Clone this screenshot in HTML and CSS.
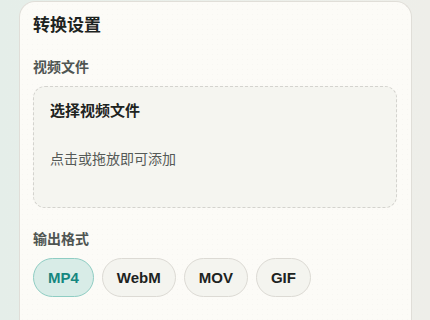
FILE: index.html
```html
<!DOCTYPE html>
<html lang="zh-CN">
<head>
<meta charset="UTF-8">
<title>转换设置</title>
<link rel="stylesheet" href="styles.css">
</head>
<body>
<div class="panel">
    <h2 class="panel-title">转换设置</h2>

    <div class="field-label">视频文件</div>
    <div class="dropzone">
        <div class="dropzone-title">选择视频文件</div>
        <div class="dropzone-hint">点击或拖放即可添加</div>
    </div>

    <div class="field-label">输出格式</div>
    <div class="chips">
        <button class="chip active">MP4</button>
        <button class="chip">WebM</button>
        <button class="chip">MOV</button>
        <button class="chip">GIF</button>
    </div>
</div>
</body>
</html>
```

FILE: styles.css
```css
body {
    margin: 0;
    padding: 1px 0 0 19px;
    font-family: "Noto Sans CJK SC", "Liberation Sans", sans-serif;
    background: linear-gradient(90deg, #e5eee9 0%, #ebefea 50%, #eeeee9 100%);
    height: 100vh;
    overflow: hidden;
    box-sizing: border-box;
    display: flex;
    flex-direction: column;
}

/* 卡片延伸到窗口底部，底边不显示 */
.panel {
    width: 393px;
    flex: 1;
    box-sizing: border-box;
    background-color: #fcfbf7;
    background-image: radial-gradient(rgba(0,0,0,0.02) 0.6px, transparent 0.8px);
    background-size: 5px 5px;
    border: 1px solid #e0ded8;
    border-bottom: 0;
    border-radius: 16px 16px 0 0;
    padding: 10px 14px 0 13px;
}

.panel-title {
    margin: 0;
    font-size: 17px;
    line-height: 24px;
    font-weight: 700;
    color: #1d2321;
}

.field-label {
    margin-top: 20px;
    font-size: 14px;
    line-height: 20px;
    font-weight: 700;
    color: #4f5552;
}

.dropzone {
    margin-top: 10px;
    height: 122px;
    box-sizing: border-box;
    background: #f5f5f0;
    border: 1px dashed #d4d3ce;
    border-radius: 12px;
    padding: 12px 16px;
}

.dropzone-title {
    font-size: 15px;
    line-height: 22px;
    font-weight: 700;
    color: #1d2321;
}

.dropzone-hint {
    margin-top: 27px;
    font-size: 14px;
    line-height: 20px;
    color: #555a57;
}

.chips {
    display: flex;
    gap: 8px;
    margin-top: 10px;
}

.chip {
    font-family: "Liberation Sans", Arial, sans-serif;
    font-size: 15px;
    font-weight: 700;
    line-height: 37px;
    padding: 0 14px;
    border: 1px solid #dcdad4;
    border-radius: 20px;
    background: #f4f4ef;
    color: #1d2321;
    cursor: pointer;
}

.chip.active {
    background: #d8ece7;
    border-color: #8fcdc3;
    color: #15877f;
}
```
